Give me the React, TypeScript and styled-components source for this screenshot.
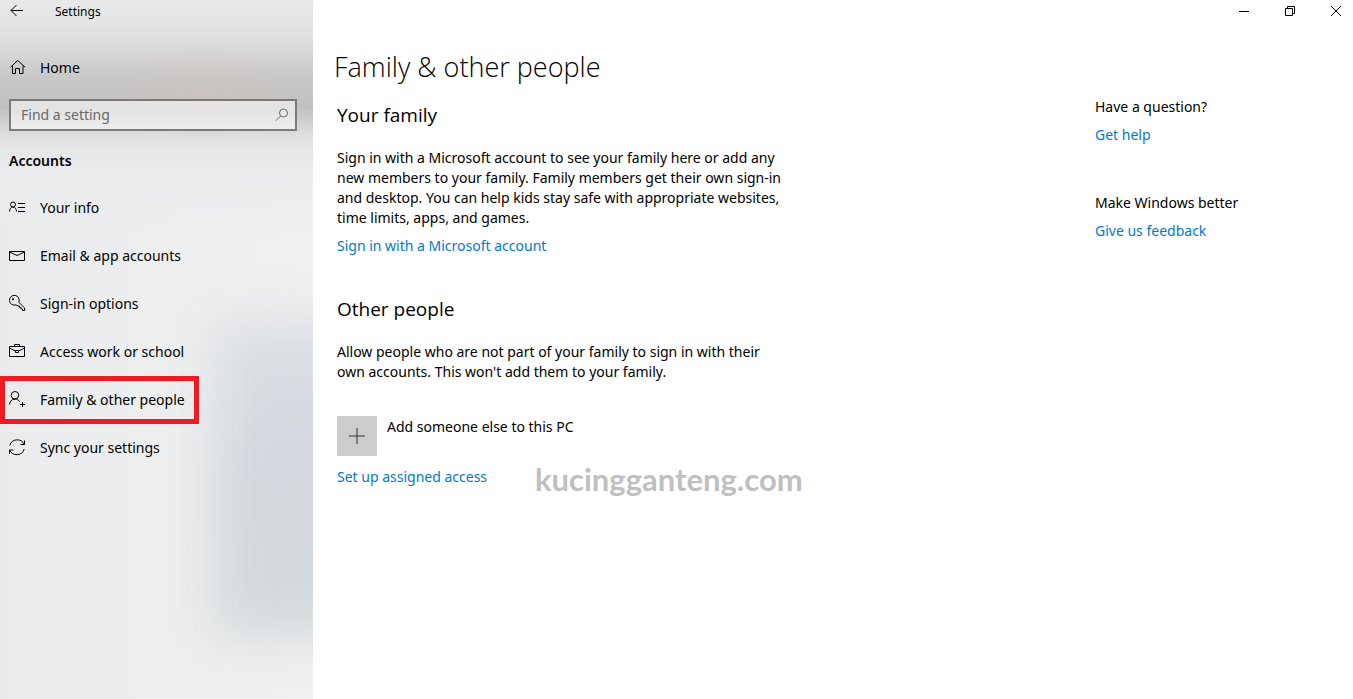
import React from "react";
import styled, { createGlobalStyle } from "styled-components";

const GlobalStyle = createGlobalStyle`
  *, *::before, *::after { box-sizing: border-box; }
  body {
    margin: 0;
    background: #fff;
    color: #000;
    font-family: "Noto Sans", "Segoe UI", sans-serif;
    font-size: 14px;
    line-height: 20px;
  }
  h1, h2, p, ul { margin: 0; padding: 0; font-weight: 400; }
  button, input { font: inherit; color: inherit; }
`;

const Window = styled.div`
  display: grid;
  grid-template-columns: 313px 1fr;
  min-height: 100vh;
`;

const Sidebar = styled.aside`
  position: relative;
  overflow: hidden;
  isolation: isolate;
  background:
    radial-gradient(ellipse 110px 46px at 205px 92px, rgba(212, 194, 186, 0.4), rgba(212, 194, 186, 0)),
    linear-gradient(
      180deg,
      #e8eaea 0,
      #e2e3e3 28px,
      #d7d7d7 52px,
      #c9c9c9 76px,
      #c0c0c0 108px,
      #d2d2d2 124px,
      #e2e3e3 140px,
      #ebeced 168px,
      rgba(236, 237, 238, 0) 240px
    ),
    linear-gradient(90deg, #eaebed 0, #eeefef 60%, #f0f0f0 100%);

  &::before {
    content: "";
    position: absolute;
    z-index: -1;
    left: 212px;
    right: -60px;
    top: 320px;
    height: 318px;
    background: linear-gradient(180deg, #dce0e5, #d3d7dd 50%, #d5dadd);
    filter: blur(24px);
  }
`;

const SidebarTitle = styled.div`
  display: flex;
  align-items: center;
  height: 24px;
  padding-left: 9px;
  font-size: 12px;
`;

const BackButton = styled.button`
  display: flex;
  width: 46px;
  padding: 0;
  border: 0;
  background: none;
`;

const NavLink = styled.a<{ $marked?: boolean }>`
  display: flex;
  align-items: center;
  gap: 14px;
  width: 199px;
  height: 48px;
  padding-left: 9px;
  color: #000;
  text-decoration: none;
  white-space: nowrap;
  ${(p) => p.$marked && "box-shadow: inset 0 0 0 5px #ed1c24;"}
`;

const HomeArea = styled.nav`
  padding-top: 20px;
`;

const SearchBox = styled.label`
  display: flex;
  align-items: center;
  height: 32px;
  margin: 7px 16px 0 9px;
  padding: 0 6px 0 10px;
  border: 2px solid #7b7a79;
  background: rgba(255, 255, 255, 0.55);
  color: #6d6a69;
`;

const SearchInput = styled.input`
  flex: 1;
  min-width: 0;
  padding: 0;
  border: 0;
  outline: 0;
  background: none;
  &::placeholder { color: #6a6868; opacity: 1; }
`;

const SectionName = styled.h2`
  && {
    padding: 20px 9px 13px;
    font-size: 14px;
    font-weight: 600;
  }
`;

const NavList = styled.ul`
  list-style: none;
`;

const Main = styled.main`
  display: flex;
  flex-direction: column;
`;

const WindowControls = styled.div`
  display: flex;
  justify-content: flex-end;
  height: 24px;
`;

const ControlButton = styled.button`
  display: flex;
  align-items: center;
  justify-content: center;
  width: 46px;
  height: 22px;
  padding: 0;
  border: 0;
  background: none;
  &:last-child {
    width: 34px;
    margin-left: 6px;
  }
`;

const Columns = styled.div`
  display: grid;
  grid-template-columns: 1fr 258px;
  padding: 25px 0 24px 24px;
`;

const Content = styled.div`
  max-width: 480px;
`;

const PageTitle = styled.h1`
  && { font-weight: 300; }
  margin: 0 0 18px -3px;
  font-family: "Open Sans", "Segoe UI", sans-serif;
  font-size: 27px;
  line-height: 36px;
`;

const Section = styled.section`
  margin-bottom: 41px;
`;

const SectionTitle = styled.h2`
  margin-bottom: 21px;
  font-family: "Open Sans", "Segoe UI", sans-serif;
  font-size: 19px;
  line-height: 24px;
`;

const Paragraph = styled.p`
  max-width: 450px;
  margin-bottom: 8px;
`;

const Link = styled.a`
  display: block;
  width: fit-content;
  color: #0078d7;
  text-decoration: none;
`;

const AddButton = styled.button`
  display: flex;
  gap: 10px;
  margin: 34px 0 11px;
  padding: 0;
  border: 0;
  background: none;
  line-height: 22px;
`;

const AddTile = styled.span`
  display: flex;
  align-items: center;
  justify-content: center;
  width: 40px;
  height: 40px;
  background: #ccc;
  color: #333;
`;

const LinkRow = styled.div`
  position: relative;
`;

const Watermark = styled.span`
  position: absolute;
  left: 198px;
  top: -6px;
  color: #bfbfbf;
  font: 700 31px/36px Lato, Calibri, sans-serif;
`;

const Aside = styled.aside`
  padding-top: 48px;
`;

const AsideGroup = styled.div`
  display: grid;
  gap: 8px;
  margin-bottom: 48px;
`;

const Icon = styled.svg.attrs({ "aria-hidden": true })`
  flex: none;
  fill: none;
  stroke: currentColor;
`;

const icons = {
  home: (
    <>
      <path d="M1.5 8.2 8.8 1.5l7.3 6.7" />
      <path d="M3.5 6.800v7.700h3V9.500h4v5h3.500V6.800" />
    </>
  ),
  info: (
    <>
      <circle cx="4" cy="5.500" r="2.500" />
      <path d="M.5 12.500C.7 9.500 2 8 4 8s3.300 1.500 3.500 4.500" />
      <path d="M9 4.500h7M9 8.500h7M9 12.500h7" />
    </>
  ),
  mail: <path d="M.5 4.500h15v9H.5zM.5 5l7.500 3.500 7.500-3.500" />,
  key: (
    <>
      <path d="M9.800 7.300A4.900 4.900 0 1 0 6.900 9.900L9 11h1.500v1.500H12v1.500h1.500v1.500h2.200v-2.500z" />
      <circle cx="4" cy="4.300" r="1" fill="currentColor" stroke="none" />
    </>
  ),
  work: (
    <>
      <path d="M.5 3.500h15v10H.5zM5.500 3.500v-2h5v2M.5 5l6 3M15.500 5l-6 3" />
      <path d="M6.500 7.500h3v2h-3z" />
    </>
  ),
  family: (
    <>
      <circle cx="6" cy="4.300" r="3.800" />
      <path d="M.5 13.500C.8 10.200 3 8.100 6 8.100c2 0 3.700 1 4.700 2.600" />
      <path d="M13.500 11v5M11 13.500h5" />
    </>
  ),
  sync: (
    <>
      <path d="M.8 6.500A7.700 7.700 0 0 1 15.300 5.500M15.500 1.500v4h-4" />
      <path d="M15.200 10A7.700 7.700 0 0 1 .7 11M.5 15v-4h4" />
    </>
  ),
};

type IconName = keyof typeof icons;

const NavItem = ({ icon, label, marked }: { icon: IconName; label: string; marked?: boolean }) => (
  <NavLink href="#" $marked={marked} aria-current={marked ? "page" : undefined}>
    <Icon width="17" height="18" viewBox="0 0 17 18">{icons[icon]}</Icon>
    {label}
  </NavLink>
);

const items: { icon: IconName; label: string; marked?: boolean }[] = [
  { icon: "info", label: "Your info" },
  { icon: "mail", label: "Email & app accounts" },
  { icon: "key", label: "Sign-in options" },
  { icon: "work", label: "Access work or school" },
  { icon: "family", label: "Family & other people", marked: true },
  { icon: "sync", label: "Sync your settings" },
];

export default function App() {
  return (
    <>
      <GlobalStyle />
      <Window>
        <Sidebar>
          <SidebarTitle>
            <BackButton aria-label="Back">
              <Icon width="16" height="18" viewBox="0 0 16 18">
                <path d="M2 7.500h12M7.500 2 2 7.500 7.500 13" />
              </Icon>
            </BackButton>
            Settings
          </SidebarTitle>
          <HomeArea>
            <NavItem icon="home" label="Home" />
          </HomeArea>
          <SearchBox>
            <SearchInput type="text" placeholder="Find a setting" aria-label="Find a setting" />
            <Icon width="14" height="14" viewBox="0 0 14 14">
              <circle cx="8.500" cy="5" r="4" />
              <path d="M5.600 7.900.8 12.700" />
            </Icon>
          </SearchBox>
          <SectionName>Accounts</SectionName>
          <NavList>
            {items.map((item) => (
              <li key={item.label}>
                <NavItem {...item} />
              </li>
            ))}
          </NavList>
        </Sidebar>
        <Main>
          <WindowControls>
            <ControlButton aria-label="Minimize">
              <Icon width="11" height="10" viewBox="0 0 11 10"><path d="M0 5.500h10" /></Icon>
            </ControlButton>
            <ControlButton aria-label="Restore">
              <Icon width="11" height="10" viewBox="0 0 11 10">
                <path d="M.5 2.500h7v7h-7zM2.500 2.500v-2h7v7h-2" />
              </Icon>
            </ControlButton>
            <ControlButton aria-label="Close">
              <Icon width="10" height="10" viewBox="0 0 10 10"><path d="m0 0 10 10M10 0 0 10" /></Icon>
            </ControlButton>
          </WindowControls>
          <Columns>
            <Content>
              <PageTitle>Family &amp; other people</PageTitle>
              <Section>
                <SectionTitle>Your family</SectionTitle>
                <Paragraph>
                  Sign in with a Microsoft account to see your family here or add any new members to your
                  family. Family members get their own sign-in and desktop. You can help kids stay safe with
                  appropriate websites, time limits, apps, and games.
                </Paragraph>
                <Link href="#">Sign in with a Microsoft account</Link>
              </Section>
              <Section>
                <SectionTitle>Other people</SectionTitle>
                <Paragraph>
                  Allow people who are not part of your family to sign in with their own accounts. This won't
                  add them to your family.
                </Paragraph>
                <AddButton>
                  <AddTile>
                    <Icon width="16" height="16" viewBox="0 0 16 16"><path d="M8 0v16M0 8h16" /></Icon>
                  </AddTile>
                  Add someone else to this PC
                </AddButton>
                <LinkRow>
                  <Link href="#">Set up assigned access</Link>
                  <Watermark>kucingganteng.com</Watermark>
                </LinkRow>
              </Section>
            </Content>
            <Aside>
              <AsideGroup>
                <p>Have a question?</p>
                <Link href="#">Get help</Link>
              </AsideGroup>
              <AsideGroup>
                <p>Make Windows better</p>
                <Link href="#">Give us feedback</Link>
              </AsideGroup>
            </Aside>
          </Columns>
        </Main>
      </Window>
    </>
  );
}
